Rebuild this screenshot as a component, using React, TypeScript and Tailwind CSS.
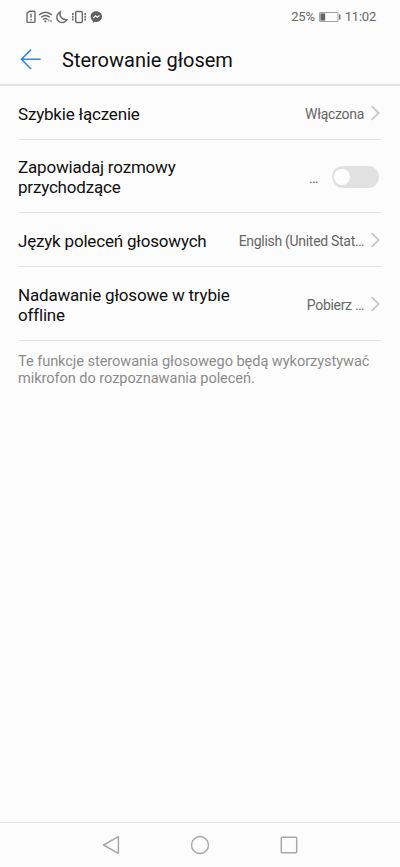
import React from 'react';

function Chevron() {
  return (
    <svg className="ml-[7px] mr-[2px] -mt-[2px] shrink-0" width="9" height="16" viewBox="0 0 9 16" fill="none" stroke="#c8c8c8" strokeWidth="1.8">
      <path d="M0.7 1.2 L7.7 8 L0.7 14.8" />
    </svg>
  );
}

type RowProps = { title: React.ReactNode; height: string; children: React.ReactNode };

function Row({ title, height, children }: RowProps) {
  return (
    <div className={`mx-[18px] flex items-center justify-between border-b border-[#e2e2e2] pt-[2px] ${height}`}>
      <div className="whitespace-nowrap text-[17px] leading-[20px] tracking-[-0.19px] text-[#101010]">{title}</div>
      <div className="flex items-center whitespace-nowrap text-[14px] leading-[18px] tracking-[-0.3px] text-[#666]">{children}</div>
    </div>
  );
}

function StatusBar() {
  return (
    <div className="flex h-[34px] items-center justify-between pl-[26px] pr-[24px] text-[13px] text-[#666]">
      <svg className="-mt-[1px]" width="78" height="14" viewBox="0 0 78 14" fill="none" stroke="#6c6c6c" strokeWidth="1.4">
        <path d="M1 3.1 L3.4 1.2 H8 Q9 1.2 9 2.2 V11.4 Q9 12.4 8 12.4 H2 Q1 12.4 1 11.4 Z" />
        <path d="M5 3.8 V7.7 M5 9 V10.4" strokeWidth="1.5" />
        <path d="M13 5 Q19.5 -0.6 26 5 M15.2 7.3 Q19.5 3.5 23.8 7.3 M17.2 9.5 Q19.5 7.6 21.6 9.5" />
        <circle cx="19.4" cy="11.3" r="1.1" fill="#6c6c6c" stroke="none" />
        <path d="M22.9 9.2 V11.5 M25 10 V12.3" strokeWidth="0.9" />
        <path d="M34.3 1.8 C30 4.3 29.7 10 33.5 11.9 C36.4 13.2 39.8 12.2 41 9.7 C36.3 10 33.1 6.8 34.3 1.8 Z" />
        <rect x="49.7" y="1.5" width="6.6" height="11" rx="1" />
        <path d="M46.8 3 V11 M59.2 3 V11" strokeDasharray="2 0.8" strokeWidth="1.6" />
        <path d="M70.3 1.3 C66.8 1.3 64.6 3.6 64.6 6.6 C64.6 8.5 65.5 10 66.8 10.9 V13 L68.8 11.8 C73 12.7 76 10.1 76 6.6 C76 3.6 73.6 1.3 70.3 1.3 Z" fill="#606060" stroke="none" />
        <path d="M67.2 8 L69.6 5.7 L71.2 7.2 L73.5 5.5" stroke="#fcfcfc" strokeWidth="1.1" />
      </svg>
      <div className="flex items-center tracking-[-0.22px]">
        <span>25%</span>
        <svg className="ml-[4px] mr-[4px]" width="22" height="10" viewBox="0 0 22 10">
          <rect x="0.5" y="0.5" width="18.5" height="9" rx="0.5" fill="none" stroke="#a2a2a2" />
          <rect x="1.4" y="1.4" width="4.8" height="7.2" fill="#666" />
          <rect x="20" y="2.5" width="1.5" height="5" fill="#777" />
        </svg>
        <span>11:02</span>
      </div>
    </div>
  );
}

export default function App() {
  return (
    <div className="flex h-[867px] w-[400px] flex-col bg-[#fcfcfc] font-[Roboto,sans-serif]">
      <StatusBar />
      <header className="flex h-[52px] items-center border-b-2 border-[#e2e2e2] pl-[20px]">
        <svg width="22" height="22" viewBox="0 0 22 22" fill="none" stroke="#2d8ade" strokeWidth="1.6">
          <path d="M11 1.6 L1.5 11.3 L11 21 M1.5 11.3 H20.6" />
        </svg>
        <h1 className="ml-[20px] pt-[2px] text-[20px] leading-[26px] text-[#101010]">Sterowanie głosem</h1>
      </header>
      <main className="flex-1">
        <Row title="Szybkie łączenie" height="h-[54px]">
          <span>Włączona</span>
          <Chevron />
        </Row>
        <Row title={<>Zapowiadaj rozmowy<br />przychodzące</>} height="h-[73px]">
          <span className="pt-[2px]">…</span>
          <span className="ml-[14px] mr-[3px] flex h-[22px] w-[47px] items-center rounded-full bg-[#e1e1e1] pl-[2px]">
            <span className="h-[16px] w-[16px] rounded-full bg-white" />
          </span>
        </Row>
        <Row title="Język poleceń głosowych" height="h-[54px]">
          <span>English (United Stat…</span>
          <Chevron />
        </Row>
        <Row title={<>Nadawanie głosowe w trybie<br />offline</>} height="h-[74px]">
          <span>Pobierz …</span>
          <Chevron />
        </Row>
        <p className="mx-[18px] mt-[12px] whitespace-nowrap text-[14.6px] leading-[17px] tracking-[-0.07px] text-[#8c8c8c]">
          Te funkcje sterowania głosowego będą wykorzystywać<br />mikrofon do rozpoznawania poleceń.
        </p>
      </main>
      <nav className="flex h-[45px] items-center justify-between border-t border-[#e6e6e6] px-[102px] pb-[1px]">
        <svg width="18" height="20" viewBox="0 0 18 20" fill="none" stroke="#a8a8a8" strokeWidth="1.5" strokeLinejoin="round">
          <path d="M16.4 1.7 V18.3 L1.5 10 Z" />
        </svg>
        <svg width="20" height="20" viewBox="0 0 20 20" fill="none" stroke="#a8a8a8" strokeWidth="1.5">
          <circle cx="10" cy="10" r="8.5" />
        </svg>
        <svg width="18" height="18" viewBox="0 0 18 18" fill="none" stroke="#a8a8a8" strokeWidth="1.5">
          <rect x="1.3" y="1.3" width="15.4" height="15.4" rx="0.8" />
        </svg>
      </nav>
    </div>
  );
}
